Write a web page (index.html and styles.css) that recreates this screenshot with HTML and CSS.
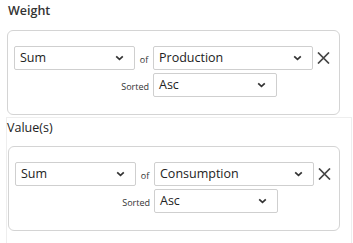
FILE: index.html
```html
<!DOCTYPE html>
<html lang="en">
<head>
    <meta charset="UTF-8">
    <meta name="viewport" content="width=device-width, initial-scale=1.0">
    <title>Aggregate Settings</title>
    <link rel="stylesheet" href="styles.css">
</head>
<body>
    <div class="section">
        <h2 class="title">Weight</h2>
        <div class="group">
            <div class="select sel-func"><span>Sum</span>
                <svg class="chev" width="9" height="6" viewBox="0 0 9 6"><path d="M1.2 1.4 L4.5 4.4 L7.8 1.4" fill="none" stroke="#333" stroke-width="1.7"/></svg>
            </div>
            <span class="small of">of</span>
            <div class="select sel-field"><span>Production</span>
                <svg class="chev" width="9" height="6" viewBox="0 0 9 6"><path d="M1.2 1.4 L4.5 4.4 L7.8 1.4" fill="none" stroke="#333" stroke-width="1.7"/></svg>
            </div>
            <button class="remove">
                <svg width="13" height="12" viewBox="0 0 13 12"><path d="M1 0.5 L12 11.5 M12 0.5 L1 11.5" stroke="#444" stroke-width="1.7"/></svg>
            </button>
            <span class="small sorted">Sorted</span>
            <div class="select sel-sort"><span>Asc</span>
                <svg class="chev" width="9" height="6" viewBox="0 0 9 6"><path d="M1.2 1.4 L4.5 4.4 L7.8 1.4" fill="none" stroke="#333" stroke-width="1.7"/></svg>
            </div>
        </div>
    </div>

    <div class="panel">
        <h2 class="title title-plain">Value(s)</h2>
        <div class="group">
            <div class="select sel-func"><span>Sum</span>
                <svg class="chev" width="9" height="6" viewBox="0 0 9 6"><path d="M1.2 1.4 L4.5 4.4 L7.8 1.4" fill="none" stroke="#333" stroke-width="1.7"/></svg>
            </div>
            <span class="small of">of</span>
            <div class="select sel-field"><span>Consumption</span>
                <svg class="chev" width="9" height="6" viewBox="0 0 9 6"><path d="M1.2 1.4 L4.5 4.4 L7.8 1.4" fill="none" stroke="#333" stroke-width="1.7"/></svg>
            </div>
            <button class="remove">
                <svg width="13" height="12" viewBox="0 0 13 12"><path d="M1 0.5 L12 11.5 M12 0.5 L1 11.5" stroke="#444" stroke-width="1.7"/></svg>
            </button>
            <span class="small sorted">Sorted</span>
            <div class="select sel-sort"><span>Asc</span>
                <svg class="chev" width="9" height="6" viewBox="0 0 9 6"><path d="M1.2 1.4 L4.5 4.4 L7.8 1.4" fill="none" stroke="#333" stroke-width="1.7"/></svg>
            </div>
        </div>
    </div>
</body>
</html>
```

FILE: styles.css
```css
body {
    margin: 0;
    padding: 0;
    font-family: "Open Sans", "Noto Sans", sans-serif;
    color: #222;
    background: white;
    overflow: hidden;
}
.section {
    padding: 0 13px 0 7px;
}
.title {
    margin: 0;
    padding: 2px 0 0 1px;
    height: 28px;
    font-size: 12.5px;
    font-weight: 600;
    color: #333;
}
.title-plain {
    font-weight: 500;
    color: #222;
    padding: 0;
    height: 27px;
}
.group {
    display: grid;
    grid-template-columns: 121px 18px 160px auto;
    grid-template-rows: 24px 24px;
    row-gap: 3px;
    padding: 15px 6px 17px 6px;
    border: 1px solid #d4d4d4;
    border-radius: 6px;
}
.panel {
    margin: 2px 1px 0 6px;
    padding: 1px 11px 0 1px;
    height: 124px;
    border: 1px solid #eeeeee;
    border-bottom: none;
}
.panel .title {
    margin-left: -1px;
}
.select {
    display: flex;
    align-items: center;
    justify-content: space-between;
    box-sizing: border-box;
    height: 24px;
    padding: 0 10px 1px 5px;
    border: 1px solid #cfcfcf;
    border-radius: 2px;
    font-size: 12.5px;
    color: #222;
    background: white;
}
.chev {
    margin-top: 1px;
}
.sel-func {
    grid-column: 1;
    grid-row: 1;
}
.of {
    grid-column: 2;
    grid-row: 1;
    justify-self: center;
}
.sel-field {
    grid-column: 3;
    grid-row: 1;
}
.remove {
    grid-column: 4;
    grid-row: 1;
    justify-self: start;
    align-self: center;
    margin-left: 4px;
    padding: 0;
    border: none;
    background: none;
    display: flex;
}
.small {
    font-size: 9px;
    color: #333;
    align-self: end;
    padding-bottom: 4px;
}
.sorted {
    grid-column: 1 / 3;
    grid-row: 2;
    justify-self: end;
    padding-right: 4px;
}
.sel-sort {
    grid-column: 3;
    grid-row: 2;
    width: 124px;
}
```
